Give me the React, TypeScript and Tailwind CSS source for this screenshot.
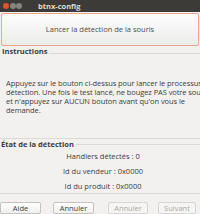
import React from "react";

export default function App() {
  const font = { fontFamily: '"Open Sans", "DejaVu Sans", sans-serif' };
  return (
    <div
      className="w-[200px] h-[214px] bg-[#f2f1f0] flex flex-col overflow-hidden text-[#3c3c3c] text-[7.5px] leading-[9px]"
      style={font}
    >
      {/* title bar */}
      <div className="h-[12px] bg-[#3c3b37] flex items-center pl-[3px] shrink-0">
        <div className="w-[6px] h-[6px] rounded-full bg-[#e3532a]" />
        <div className="w-[6px] h-[6px] rounded-full bg-[#85847f] ml-[1px]" />
        <div className="w-[6px] h-[6px] rounded-full bg-[#85847f] ml-[0px]" />
        <div className="ml-[16px] text-[#dfdbd2] font-bold text-[7.5px] leading-[12px]">btnx-config</div>
      </div>
      {/* main button */}
      <div className="h-[33px] mt-[1px] mx-[1px] border border-[#eda58c] rounded-[2px] bg-gradient-to-b from-[#fdfdfd] to-[#ececeb] flex items-center justify-center shrink-0">
        <span className="text-[#4c4c4c]">Lancer la détection de la souris</span>
      </div>
      {/* Instructions frame */}
      <div className="flex items-center h-[9px] mt-[1px] shrink-0">
        <span className="font-bold pl-[2px] text-[#3c3c3c]">Instructions</span>
        <div className="flex-1 h-px bg-[#dcdad5] ml-[2px] mt-[3px]" />
      </div>
      <div className="pl-[6px] pt-[23px] h-[82px] shrink-0 whitespace-nowrap overflow-hidden tracking-[-0.08px]">
        <div>Appuyez sur le bouton ci-dessus pour lancer le processus de</div>
        <div>détection. Une fois le test lancé, ne bougez PAS votre souris</div>
        <div>et n'appuyez sur AUCUN bouton avant qu'on vous le</div>
        <div>demande.</div>
      </div>
      <div className="h-px bg-[#dcdad5] shrink-0" />
      {/* État frame */}
      <div className="flex items-center h-[9px] mt-[1px] shrink-0">
        <span className="font-bold pl-[1px] text-[#3c3c3c]">État de la détection</span>
        <div className="flex-1 h-px bg-[#dcdad5] ml-[2px]" />
      </div>
      <div className="flex flex-col items-center pl-[6px] pt-[3px] gap-[6px] shrink-0">
        <div>Handlers détectés : 0</div>
        <div>Id du vendeur : 0x0000</div>
        <div>Id du produit : 0x0000</div>
      </div>
      <div className="h-px bg-[#dcdad5] mt-[2px] shrink-0" />
      {/* bottom buttons */}
      <div className="flex mt-[8px] h-[12px] shrink-0">
        <div className="w-[41px] border border-[#c4c2bd] rounded-[2px] bg-gradient-to-b from-[#ffffff] to-[#efefee] flex items-center justify-center">Aide</div>
        <div className="w-[41px] ml-[12px] border border-[#c4c2bd] rounded-[2px] bg-gradient-to-b from-[#ffffff] to-[#efefee] flex items-center justify-center">Annuler</div>
        <div className="w-[40px] ml-[14px] border border-[#d8d6d2] rounded-[2px] bg-[#f6f5f4] flex items-center justify-center text-[#a8a8a5]">Annuler</div>
        <div className="w-[38px] ml-[10px] border border-[#d8d6d2] rounded-[2px] bg-[#f6f5f4] flex items-center justify-center text-[#a8a8a5]">Suivant</div>
      </div>
    </div>
  );
}
